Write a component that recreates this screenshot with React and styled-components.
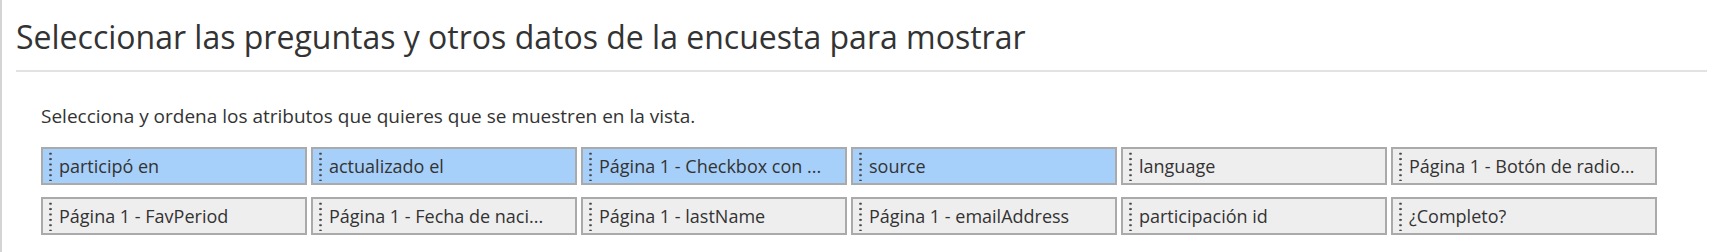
import React from 'react';
import styled, { createGlobalStyle } from 'styled-components';

const GlobalStyle = createGlobalStyle`
  body {
    margin: 0;
    background: #fff;
    font-family: "Open Sans", "Noto Sans", sans-serif;
    color: #333;
  }
`;

const StyledPanel = styled.div`
  height: 252px;
  box-sizing: border-box;
  border-left: 2px solid #d4d4d4;
  padding: 0 9px 0 14px;
`;

const StyledHeading = styled.h1`
  margin: 0;
  padding: 18px 0 14px 0;
  font-size: 32px;
  font-weight: 400;
  line-height: 38px;
  color: #333;
  border-bottom: 2px solid #e2e2e2;
`;

const StyledBody = styled.div`
  padding: 33px 0 0 25px;
`;

const StyledParagraph = styled.p`
  margin: 0 0 20px 0;
  font-size: 19px;
  line-height: 22px;
`;

const StyledGrid = styled.ul`
  list-style: none;
  margin: 0;
  padding: 0;
  width: 1616px;
  display: grid;
  grid-template-columns: repeat(6, 1fr);
  column-gap: 4px;
  row-gap: 12px;
`;

const StyledItem = styled.li`
  display: flex;
  align-items: center;
  gap: 7px;
  height: 38px;
  box-sizing: border-box;
  padding: 0 10px 0 6px;
  border: 2px solid #aaa;
  background: ${({ selected }) => (selected ? '#a6d0f9' : '#eee')};
  font-size: 18px;
  color: #333;
  white-space: nowrap;
  overflow: hidden;
`;

const StyledHandle = styled.span`
  flex: none;
  width: 3px;
  height: 30px;
  background-image: radial-gradient(circle, #444 1px, transparent 1.4px);
  background-size: 3px 5.4px;
  background-repeat: repeat-y;
`;

const StyledLabel = styled.span`
  overflow: hidden;
  text-overflow: ellipsis;
`;

const items = [
  { label: 'participó en', selected: true },
  { label: 'actualizado el', selected: true },
  { label: 'Página 1 - Checkbox con ...', selected: true },
  { label: 'source', selected: true },
  { label: 'language' },
  { label: 'Página 1 - Botón de radio...' },
  { label: 'Página 1 - FavPeriod' },
  { label: 'Página 1 - Fecha de naci...' },
  { label: 'Página 1 - lastName' },
  { label: 'Página 1 - emailAddress' },
  { label: 'participación id' },
  { label: '¿Completo?' },
];

const App = () => (
  <>
    <GlobalStyle />
    <StyledPanel>
      <StyledHeading>Seleccionar las preguntas y otros datos de la encuesta para mostrar</StyledHeading>
      <StyledBody>
        <StyledParagraph>Selecciona y ordena los atributos que quieres que se muestren en la vista.</StyledParagraph>
        <StyledGrid>
          {items.map((item) => (
            <StyledItem key={item.label} selected={item.selected}>
              <StyledHandle />
              <StyledLabel>{item.label}</StyledLabel>
            </StyledItem>
          ))}
        </StyledGrid>
      </StyledBody>
    </StyledPanel>
  </>
);

export default App;
